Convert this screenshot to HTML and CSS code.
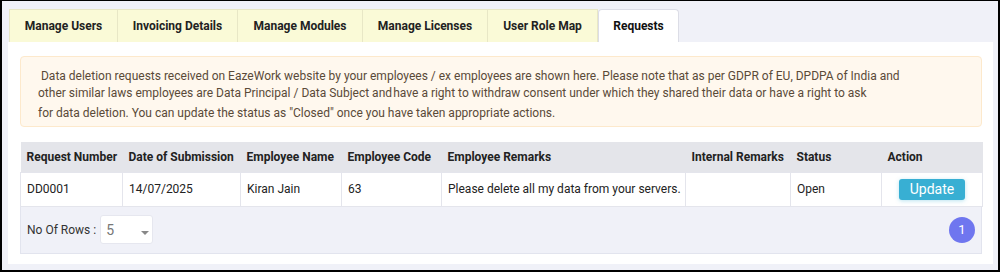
FILE: index.html
```html
<!DOCTYPE html>
<html>
<head>
<meta charset="utf-8">
<link rel="stylesheet" href="styles.css">
</head>
<body>
<div class="frame">
  <div class="tabs">
    <div class="tab t1">Manage Users</div>
    <div class="tab t2">Invoicing Details</div>
    <div class="tab t3">Manage Modules</div>
    <div class="tab t4">Manage Licenses</div>
    <div class="tab t5">User Role Map</div>
    <div class="tab t6 active">Requests</div>
  </div>
  <div class="panel">
    <div class="alert">
      <div class="para">&nbsp;Data deletion requests received on EazeWork website by your employees / ex employees are shown here. Please note that as per GDPR of EU, DPDPA of India and<br>other similar laws employees are Data Principal / Data Subject and&#8202;have a right to withdraw consent under which they shared their data or have a right to ask</div>
      <div class="para last">for data deletion. You can update the status as "Closed" once you have taken appropriate actions.</div>
    </div>
    <table class="grid">
      <colgroup>
        <col class="c1"><col class="c2"><col class="c3"><col class="c4"><col class="c5"><col class="c6"><col class="c7"><col class="c8">
      </colgroup>
      <thead>
        <tr>
          <th>Request Number</th>
          <th>Date of Submission</th>
          <th>Employee Name</th>
          <th>Employee Code</th>
          <th>Employee Remarks</th>
          <th>Internal Remarks</th>
          <th>Status</th>
          <th>Action</th>
        </tr>
      </thead>
      <tbody>
        <tr>
          <td>DD0001</td>
          <td>14/07/2025</td>
          <td>Kiran Jain</td>
          <td>63</td>
          <td>Please delete all my data from your servers.</td>
          <td></td>
          <td>Open</td>
          <td class="act"><button class="btn">Update</button></td>
        </tr>
      </tbody>
    </table>
    <div class="pager">
      <div class="rows">
        <span class="lbl">No Of Rows :</span>
        <div class="select"><span class="val">5</span><span class="caret"></span></div>
      </div>
      <div class="page">1</div>
    </div>
  </div>
</div>
</body>
</html>
```

FILE: styles.css
```css
* { box-sizing: border-box; }
html, body { margin: 0; padding: 0; }
body {
  width: 1000px;
  height: 272px;
  font-family: Roboto, "Liberation Sans", Arial, sans-serif;
  font-size: 12px;
  color: #333;
}
.frame {
  width: 1000px;
  height: 272px;
  border-style: solid;
  border-color: #000;
  border-width: 1px 2px 2px 2px;
  background: #f0f1f8;
  padding: 8px 5px 7px 6px;
  display: flex;
  flex-direction: column;
}
.tabs {
  display: flex;
  height: 33px;
  margin-left: 1px;
}
.tab {
  height: 33px;
  background: #fafad7;
  border: 1px solid #e8e7c6;
  border-bottom: none;
  border-left: none;
  font-weight: bold;
  color: #222;
  display: flex;
  align-items: center;
  justify-content: center;
  font-size: 12px;
}
.t1 { width: 109px; border-left: 1px solid #e8e7c6; }
.t2 { width: 120px; }
.t3 { width: 125px; }
.t4 { width: 125px; }
.t5 { width: 110px; }
.t6 { width: 81px; }
.tab.active {
  background: #fff;
  border: 1px solid #dcdde6;
  border-bottom: none;
  border-radius: 4px 4px 0 0;
  color: #111;
}
.panel {
  background: #fff;
  flex: 1;
  padding: 14px 11px 10px 12px;
}
.alert {
  height: 71px;
  background: #fff8ee;
  border: 1px solid #fde9cc;
  border-radius: 4px;
  padding: 11px 16px 0 17px;
  color: #5a4a38;
  font-size: 12px;
}
.para { line-height: 17px; }
.para.last { line-height: 18px; margin-top: 2px; }
.grid {
  margin-top: 15px;
  width: 962px;
  border-collapse: collapse;
  table-layout: fixed;
}
.c1 { width: 102px; }
.c2 { width: 118px; }
.c3 { width: 101px; }
.c4 { width: 100px; }
.c5 { width: 244px; }
.c6 { width: 105px; }
.c7 { width: 91px; }
.c8 { width: 101px; }
.grid th {
  background: #e4e5ea;
  height: 30px;
  text-align: left;
  font-weight: bold;
  color: #222;
  padding: 0 6px;
  white-space: nowrap;
  font-size: 12px;
}
.grid td {
  height: 34px;
  padding: 0 6px;
  border: 1px solid #e4e5ec;
  color: #222;
  white-space: nowrap;
  font-size: 12px;
}
.grid td.act { text-align: center; padding: 0; }
.btn {
  font-family: Roboto, "Liberation Sans", Arial, sans-serif;
  font-size: 14px;
  color: #fff;
  background: #38afd3;
  border: none;
  border-radius: 3px;
  width: 66px;
  height: 21px;
  padding: 0;
  box-shadow: 0 1px 4px rgba(56, 175, 211, 0.35);
}
.pager {
  height: 47px;
  background: #f0f1f8;
  border: 1px solid #e2e4ee;
  border-top: none;
  display: flex;
  align-items: center;
  justify-content: space-between;
  padding: 0 6px 0 6px;
}
.rows { display: flex; align-items: center; }
.lbl { color: #333; font-size: 12px; margin-right: 4px; }
.select {
  width: 53px;
  height: 29px;
  background: #fff;
  border: 1px solid #e6e7ef;
  border-radius: 3px;
  display: flex;
  align-items: center;
  padding-left: 5px;
  position: relative;
}
.val { color: #777; font-size: 14px; }
.caret {
  position: absolute;
  left: 40px;
  top: 15px;
  width: 0;
  height: 0;
  border-left: 4px solid transparent;
  border-right: 4px solid transparent;
  border-top: 4px solid #888;
}
.page {
  width: 26px;
  height: 26px;
  border-radius: 50%;
  background: #6f76ef;
  color: #fff;
  font-size: 13px;
  display: flex;
  align-items: center;
  justify-content: center;
}
```
